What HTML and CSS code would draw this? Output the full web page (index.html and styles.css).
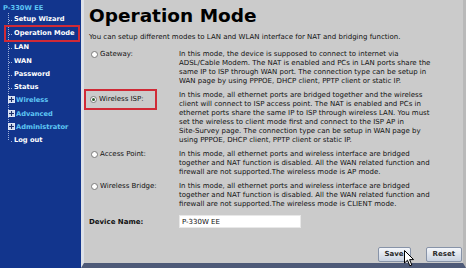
FILE: index.html
```html
<!DOCTYPE html>
<html>
<head>
<meta charset="utf-8">
<link rel="stylesheet" href="styles.css">
</head>
<body>
<div class="page">
  <nav class="side">
    <div class="brand">P-330W EE</div>
    <ul class="tree">
      <li class="leaf">Setup Wizard</li>
      <li class="leaf current">Operation Mode</li>
      <li class="leaf">LAN</li>
      <li class="leaf">WAN</li>
      <li class="leaf">Password</li>
      <li class="leaf">Status</li>
      <li class="folder"><span class="box"></span>Wireless</li>
      <li class="folder"><span class="box"></span>Advanced</li>
      <li class="folder"><span class="box"></span>Administrator</li>
      <li class="leaf last">Log out</li>
    </ul>
  </nav>
  <main class="content">
    <h1>Operation Mode</h1>
    <p class="intro">You can setup different modes to LAN and WLAN interface for NAT and bridging function.</p>
    <div class="modes">
      <label class="opt"><span class="radio"></span>Gateway:</label>
      <p class="desc">In this mode, the device is supposed to connect to internet via<br>ADSL/Cable Modem. The NAT is enabled and PCs in LAN ports share the<br>same IP to ISP through WAN port. The connection type can be setup in<br>WAN page by using PPPOE, DHCP client, PPTP client or static IP.</p>

      <label class="opt selected"><span class="radio on"></span>Wireless ISP:</label>
      <p class="desc">In this mode, all ethernet ports are bridged together and the wireless<br>client will connect to ISP access point. The NAT is enabled and PCs in<br>ethernet ports share the same IP to ISP through wireless LAN. You must<br>set the wireless to client mode first and connect to the ISP AP in<br>Site-Survey page. The connection type can be setup in WAN page by<br>using PPPOE, DHCP client, PPTP client or static IP.</p>

      <label class="opt"><span class="radio"></span>Access Point:</label>
      <p class="desc">In this mode, all ethernet ports and wireless interface are bridged<br>together and NAT function is disabled. All the WAN related function and<br>firewall are not supported.The wireless mode is AP mode.</p>

      <label class="opt"><span class="radio"></span>Wireless Bridge:</label>
      <p class="desc">In this mode, all ethernet ports and wireless interface are bridged<br>together and NAT function is disabled. All the WAN related function and<br>firewall are not supported.The wireless mode is CLIENT mode.</p>
    </div>
    <div class="device">
      <span class="dev-label">Device Name:</span>
      <span class="input">P-330W EE</span>
    </div>
    <div class="actions">
      <span class="btn">Save<svg class="cursor" width="11" height="17" viewBox="0 0 11 17"><path d="M0.5 0.5 L0.5 13 L3.5 10.2 L5.8 15.8 L7.8 15 L5.6 9.6 L9.6 9.6 Z" fill="#fff" stroke="#000" stroke-width="1"/></svg></span>
      <span class="btn">Reset</span>
    </div>
  </main>
</div>
</body>
</html>
```
FILE: styles.css
```css
* { box-sizing: border-box; }
html, body { margin: 0; padding: 0; }
body { width: 466px; height: 268px; overflow: hidden; font-family: "DejaVu Sans", Verdana, sans-serif; }
.page { display: flex; height: 268px; }

.side { width: 81px; flex: none; background: #12358d; padding-top: 3px; font-weight: bold; font-size: 6.7px; }
.brand { color: #5ec6f4; padding-left: 3px; height: 10px; line-height: 10px; }
.tree { list-style: none; margin: 0 0 0 8px; padding: 0; border-left: 1px dotted #9fb0d8; width: 70px; }
.tree li { position: relative; height: 13.3px; line-height: 13.3px; padding-left: 5px; color: #fff; white-space: nowrap; }
.tree li.leaf::before { content: ""; position: absolute; left: 0; top: 7px; width: 3px; border-top: 1px dotted #9fb0d8; }
.tree li.folder { color: #5ec6f4; padding-left: 3px; margin-left: -4px; }
.tree li.last::after { content: ""; position: absolute; left: -1px; top: 7px; width: 2px; height: 7px; background: #12358d; }
.box { display: inline-block; width: 7px; height: 7px; margin-right: 1px; vertical-align: -1px; border: 1px solid #dfe6f4;
  background: linear-gradient(#1c2f6a, #1c2f6a) center / 1px 5px no-repeat, linear-gradient(#1c2f6a, #1c2f6a) center / 5px 1px no-repeat, #c8d3ea; }
.tree li.current { outline: 2px solid #d02a36; margin-left: -3px; padding-left: 8px; margin-right: 0; margin-top: 1px; margin-bottom: 1px; height: 13px; line-height: 13px; width: 72px; }
.tree li.current::before { left: 3px; }

.content { flex: 1; background: #cbcbcb; border-left: 3px solid #dde1e8; border-right: 3px solid #b9b9b9; border-bottom: 5px solid #4e5a78; padding: 5px 0 0 5px; display: flex; flex-direction: column; font-size: 7px; color: #111; }
h1 { margin: 0; font-size: 18.5px; font-weight: bold; line-height: 22px; color: #000; }
.intro { margin: 6px 0 0; line-height: 9px; }
.modes { display: grid; grid-template-columns: 90px 1fr; row-gap: 5px; margin-top: 8px; align-items: start; }
.opt { display: flex; align-items: flex-start; line-height: 9px; padding-left: 2px; }
.opt.selected { border: 2px solid #d02a36; padding: 4px 4px 4px 4px; margin: -2px 0 0 -5px; width: 73px; }
.radio { width: 7px; height: 7px; border-radius: 50%; border: 1px solid #7a7a7a; background: #fff; margin: 1px 2px 0 0; flex: none; display: flex; align-items: center; justify-content: center; }
.radio.on::after { content: ""; width: 3px; height: 3px; border-radius: 50%; background: #2e5a2e; }
.desc { margin: 0; line-height: 9px; white-space: nowrap; }
.device { display: grid; grid-template-columns: 90px 122px; margin-top: 6px; align-items: center; }
.dev-label { font-weight: bold; }
.input { background: #fff; height: 13px; line-height: 12px; padding-left: 2px; border: 1px solid #e8e8e8; }
.actions { margin-top: auto; margin-bottom: 1px; display: flex; justify-content: flex-end; gap: 15px; padding-right: 1px; }
.btn { position: relative; height: 15px; line-height: 13px; padding: 0 6px; font-weight: bold; font-size: 7px; color: #2a2a2a; background: linear-gradient(#f4f6fa, #c9d2e0); border: 1px solid #8793a8; border-radius: 2px; }
.cursor { position: absolute; left: 25px; top: 2px; }
```
